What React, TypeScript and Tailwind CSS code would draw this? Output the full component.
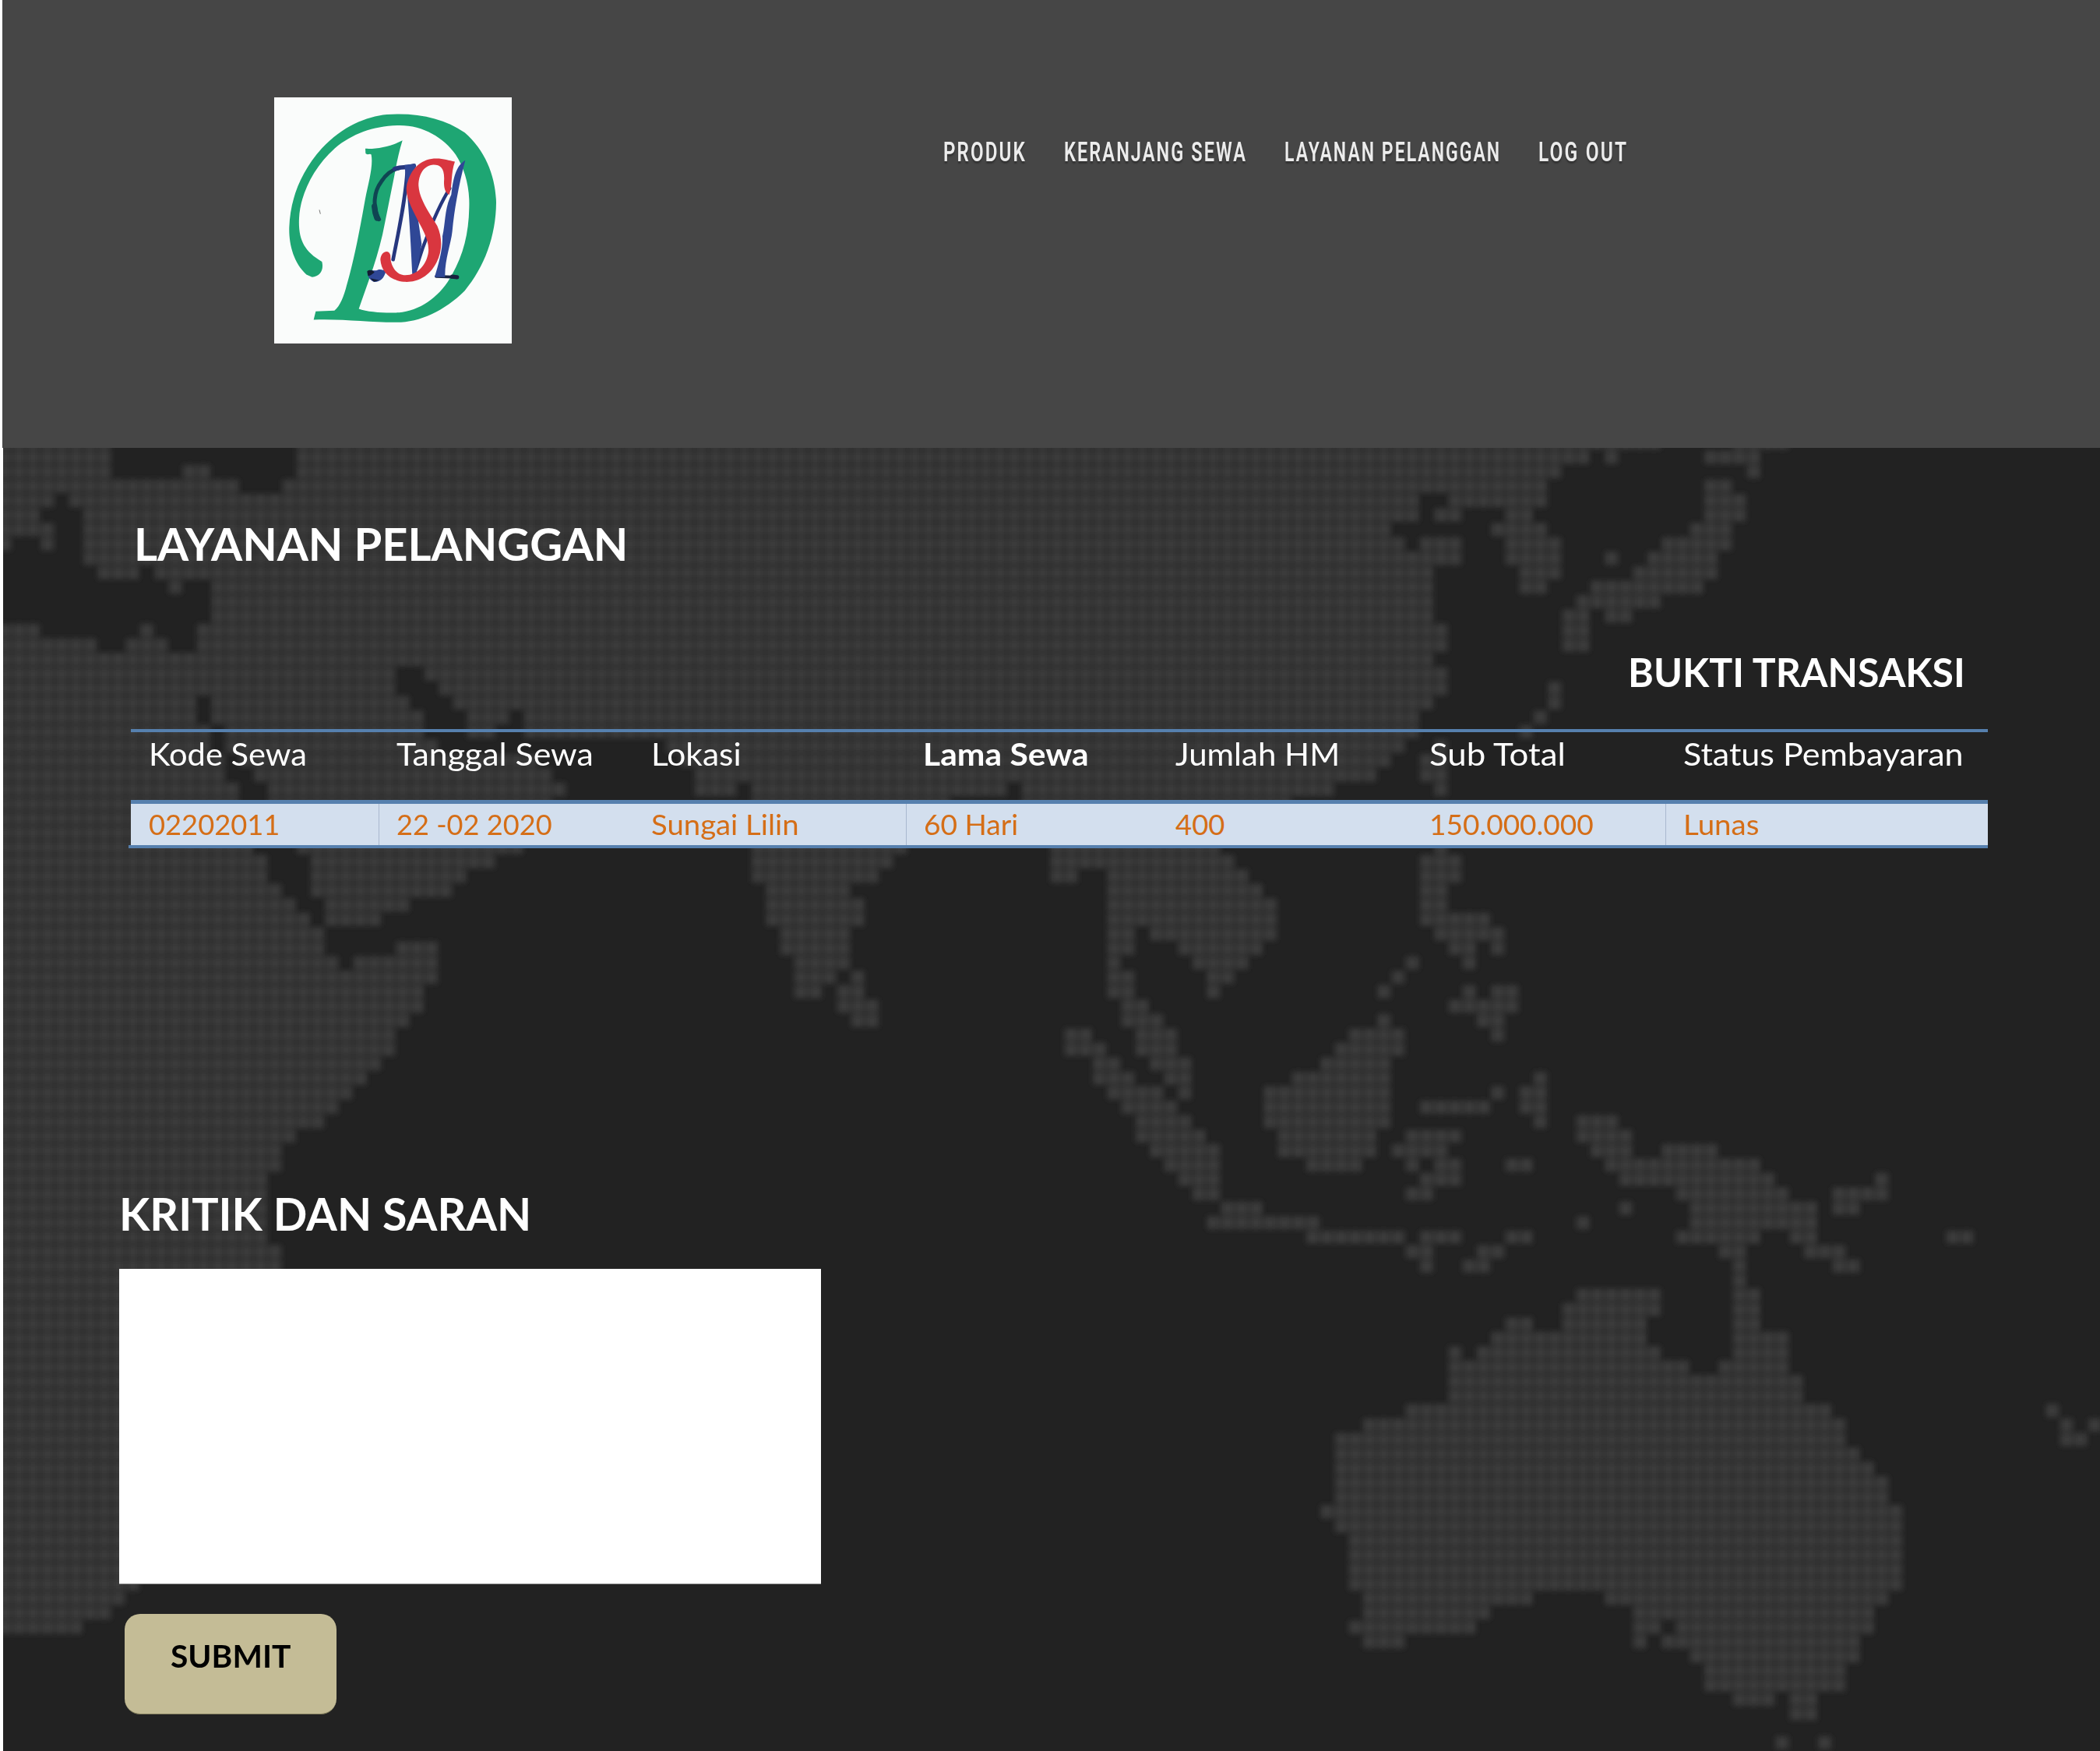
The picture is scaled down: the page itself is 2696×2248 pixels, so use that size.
import { useLayoutEffect, useRef } from "react";
import type { ReactNode } from "react";

type Run = [number, number];

const COL = 18.255;
const ROW = 18.545;

// Land cells of the dotted world map: each row lists inclusive column runs.
const LAND: Run[][] = [
  [[0, 7], [21, 116], [122, 125]],
  [[0, 7], [21, 111], [113, 113], [120, 123]],
  [[0, 7], [13, 14], [21, 109], [123, 123]],
  [[0, 16], [20, 108], [120, 121]],
  [[0, 3], [5, 99], [102, 108], [120, 122]],
  [[0, 2], [6, 99], [101, 102], [106, 107], [120, 122]],
  [[0, 3], [6, 97], [105, 108], [119, 121]],
  [[0, 0], [3, 3], [6, 98], [100, 102], [106, 109], [117, 121]],
  [[6, 102], [106, 109], [113, 113], [116, 120]],
  [[7, 9], [11, 100], [107, 109], [115, 120]],
  [[12, 12], [15, 100], [107, 108], [112, 119]],
  [[15, 100], [111, 116]],
  [[15, 100], [110, 111], [113, 114]],
  [[0, 2], [10, 10], [14, 101], [110, 111]],
  [[0, 6], [9, 11], [14, 101], [110, 111]],
  [[0, 100]],
  [[0, 27], [30, 101]],
  [[0, 27], [31, 101], [109, 109]],
  [[0, 13], [15, 28], [32, 100], [109, 109]],
  [[0, 13], [15, 29], [33, 35], [37, 99], [108, 108]],
  [[0, 14], [16, 29], [33, 34], [37, 99], [107, 107]],
  [[0, 14], [16, 30], [47, 98], [101, 101]],
  [[0, 15], [17, 37], [48, 97], [100, 101]],
  [[0, 15], [18, 38], [49, 96], [100, 101]],
  [[0, 16], [19, 39], [49, 51], [53, 70], [72, 93], [101, 101]],
  [[0, 16], [19, 38], [53, 66], [72, 90]],
  [[0, 16], [19, 38], [53, 66], [72, 88]],
  [[0, 17], [20, 37], [53, 64], [74, 85]],
  [[0, 17], [21, 36], [53, 63], [74, 85], [101, 101]],
  [[0, 18], [22, 34], [53, 62], [74, 86], [100, 102]],
  [[0, 18], [22, 32], [53, 61], [74, 75], [78, 87], [100, 102]],
  [[0, 19], [22, 31], [54, 59], [78, 88], [100, 101]],
  [[0, 20], [23, 28], [54, 60], [78, 89], [100, 101]],
  [[0, 21], [23, 26], [54, 60], [78, 89], [100, 104]],
  [[0, 22], [55, 59], [78, 79], [81, 89], [101, 105]],
  [[0, 22], [28, 30], [55, 59], [78, 79], [83, 88], [102, 103], [105, 105]],
  [[0, 23], [25, 30], [56, 59], [78, 78], [84, 87], [99, 99], [103, 103]],
  [[0, 30], [56, 58], [60, 60], [78, 79], [85, 86], [98, 98]],
  [[0, 29], [56, 57], [59, 60], [78, 79], [85, 85], [97, 97], [103, 103], [105, 106]],
  [[0, 29], [59, 61], [79, 80], [102, 106]],
  [[0, 28], [60, 61], [79, 81], [97, 97], [104, 105]],
  [[0, 27], [75, 76], [80, 82], [95, 98], [105, 105]],
  [[0, 27], [75, 77], [80, 82], [94, 98]],
  [[0, 26], [77, 78], [81, 83], [93, 97]],
  [[0, 25], [77, 79], [82, 83], [91, 97], [108, 108]],
  [[0, 24], [78, 81], [83, 83], [89, 97], [105, 105], [107, 108]],
  [[0, 23], [79, 82], [89, 97], [100, 104], [107, 108]],
  [[0, 22], [80, 83], [89, 97], [108, 108], [111, 113]],
  [[0, 20], [80, 84], [90, 96], [99, 102], [111, 114]],
  [[0, 19], [81, 85], [90, 96], [98, 101], [112, 114], [117, 120]],
  [[0, 19], [82, 85], [92, 95], [99, 99], [101, 102], [106, 107], [113, 123]],
  [[0, 18], [83, 85], [100, 102], [114, 124], [132, 132]],
  [[0, 18], [84, 85], [99, 100], [118, 125], [129, 132]],
  [[0, 18], [86, 88], [114, 114], [119, 127], [129, 130]],
  [[0, 18], [85, 92], [111, 111], [119, 127]],
  [[0, 18], [92, 98], [100, 102], [106, 107], [118, 123], [126, 127], [137, 138]],
  [[0, 19], [99, 100], [104, 105], [121, 122], [127, 129]],
  [[0, 19], [100, 100], [103, 104], [122, 122], [129, 130]],
  [[0, 19], [122, 122]],
  [[0, 19], [111, 116], [122, 123]],
  [[0, 19], [110, 116], [122, 123]],
  [[0, 19], [106, 107], [110, 115], [122, 123]],
  [[0, 19], [105, 115], [122, 125]],
  [[0, 19], [102, 102], [104, 116], [122, 125]],
  [[0, 19], [102, 118], [121, 125]],
  [[0, 18], [102, 126]],
  [[0, 18], [102, 126]],
  [[0, 18], [99, 128], [144, 144]],
  [[0, 17], [96, 129], [145, 145], [147, 147]],
  [[0, 17], [94, 129], [145, 146]],
  [[0, 16], [94, 130]],
  [[0, 16], [94, 131]],
  [[0, 15], [94, 132]],
  [[0, 14], [94, 132]],
  [[0, 13], [93, 133]],
  [[0, 12], [94, 133]],
  [[0, 12], [95, 133]],
  [[0, 11], [95, 133]],
  [[0, 10], [95, 133]],
  [[0, 9], [95, 133]],
  [[0, 8], [96, 107], [113, 132]],
  [[0, 7], [96, 104], [115, 131]],
  [[0, 5], [95, 103], [115, 116], [118, 131]],
  [[96, 98], [115, 115], [117, 130]],
  [[119, 130]],
  [[120, 129]],
  [[120, 129]],
  [[122, 124], [126, 127]],
  [[126, 127]],
  [],
  [[125, 125], [128, 128]],
];

const DOTS = LAND.map((runs, r) =>
  runs
    .map(([from, to]) => {
      let d = "";
      for (let c = from; c <= to; c++) {
        const x = (c * COL - 6.2).toFixed(1);
        const y = ((r - 1) * ROW + 3.8).toFixed(1);
        d += `M${x} ${y}h16.4v16.4h-16.4z`;
      }
      return d;
    })
    .join(""),
).join("");

function WorldMap() {
  return (
    <svg className="absolute inset-0 h-full w-full" viewBox="0 0 2692 1673" preserveAspectRatio="none" aria-hidden="true">
      <defs>
        <filter id="soft" x="-20" y="-40" width="2740" height="1760" filterUnits="userSpaceOnUse">
          <feGaussianBlur stdDeviation="3.8" />
        </filter>
      </defs>
      <path d={DOTS} fill="#3a3a3a" filter="url(#soft)" />
    </svg>
  );
}

// Condenses or widens a line of text so that it fills the given width.
function Fit({ width, children }: { width: number; children: ReactNode }) {
  const ref = useRef<HTMLSpanElement>(null);
  useLayoutEffect(() => {
    const el = ref.current;
    if (el) el.style.transform = `scaleX(${width / el.offsetWidth})`;
  }, [width]);
  return (
    <span className="block whitespace-nowrap" style={{ width }}>
      <span ref={ref} className="inline-block origin-left">
        {children}
      </span>
    </span>
  );
}

function Logo() {
  return (
    <svg className="block h-[316px] w-[305px] bg-[#fafcfb]" viewBox="66 74 915 950" preserveAspectRatio="none" role="img" aria-label="DSM">
      <path
        fill="#1ea673"
        d="M190 758C140 712 122 640 124 575C128 470 165 365 250 270C330 185 420 148 500 140C620 132 720 155 800 210C880 280 919 380 921 480C920 610 875 730 800 820C720 900 620 945 530 942C430 942 330 928 218 932L226 900L298 897C320 880 335 840 345 800C375 700 400 560 416 470C430 400 448 340 440 295C434 288 426 300 418 290L417 272C460 275 520 262 560 240C545 290 537 330 528 380L492 560C470 680 430 780 392 890C430 905 520 908 560 903C640 890 710 835 750 760C795 680 815 600 817 500C820 420 800 350 765 295C720 230 640 182 550 182C450 184 370 212 300 270C210 350 165 460 162 540C158 620 180 668 250 708C258 740 243 766 212 768Z"
      />
      <g fill="none" strokeLinecap="round">
        <path d="M470 545C445 500 448 440 478 400C500 365 525 352 545 348" stroke="#0f4552" strokeWidth="15" />
        <path d="M462 540C456 525 453 510 452 495" stroke="#0f4552" strokeWidth="22" />
        <path d="M530 350C550 342 580 346 604 338" stroke="#26377e" strokeWidth="17" />
        <path d="M578 360C572 470 545 590 524 700" stroke="#26377e" strokeWidth="14" />
        <path d="M612 735C640 640 690 510 742 425" stroke="#26377e" strokeWidth="13" />
        <path d="M690 765L772 768" stroke="#18223f" strokeWidth="11" />
        <path d="M752 766L770 768" stroke="#18223f" strokeWidth="16" />
      </g>
      <path fill="#2f4796" d="M568 335L610 330C600 440 625 570 634 640L612 765L598 760C590 600 585 500 568 335Z" />
      <path fill="#2f4796" d="M802 317C765 340 756 385 748 450C722 500 726 560 714 610C716 660 698 720 684 768L724 768C722 700 747 640 752 590C760 500 780 400 802 317Z" />
      <path fill="#2f4796" d="M425 748C440 738 455 746 465 740C480 735 490 745 497 742C490 775 470 788 450 786C435 780 425 765 425 748Z" />
      <path fill="#141c33" d="M424 745C435 737 448 742 452 750C440 760 432 765 427 762ZM436 772L450 786L470 780Z" />
      <path
        fill="#d9363f"
        d="M762 322C745 370 754 410 740 450C722 440 720 420 720 400C724 350 708 334 680 334C642 336 622 372 622 415C626 470 664 520 694 570C716 620 712 670 692 710C662 770 610 790 565 786C510 780 478 745 475 700C478 665 510 660 514 685C512 715 530 756 565 760C616 764 654 720 660 670C664 620 634 580 610 530C585 480 566 440 580 400C598 340 640 310 690 310C720 310 740 318 762 322Z"
      />
      <path d="M240 508l4 16" stroke="#777777" strokeWidth="3" />
    </svg>
  );
}

const NAV = [
  { label: "PRODUK", width: 107 },
  { label: "KERANJANG SEWA", width: 235 },
  { label: "LAYANAN PELANGGAN", width: 278 },
  { label: "LOG OUT", width: 115 },
];

const COLUMNS = [
  { title: "Kode Sewa", titleWidth: 203, value: "02202011", valueWidth: 168, divider: false, bold: false },
  { title: "Tanggal Sewa", titleWidth: 253, value: "22 -02 2020", valueWidth: 200, divider: true, bold: false },
  { title: "Lokasi", titleWidth: 116, value: "Sungai Lilin", valueWidth: 190, divider: false, bold: false },
  { title: "Lama Sewa", titleWidth: 213, value: "60 Hari", valueWidth: 121, divider: true, bold: true },
  { title: "Jumlah HM", titleWidth: 211, value: "400", valueWidth: 64, divider: false, bold: false },
  { title: "Sub Total", titleWidth: 175, value: "150.000.000", valueWidth: 211, divider: false, bold: false },
  { title: "Status Pembayaran", titleWidth: 360, value: "Lunas", valueWidth: 97, divider: true, bold: false },
];

export default function App() {
  return (
    <div className="flex h-[2248px] w-[2696px] flex-col overflow-hidden bg-white pl-1 font-['Lato',sans-serif] leading-none">
      <header className="flex h-[575px] shrink-0 items-start bg-[#464646] pt-[125px] pl-[348px] shadow-[-1px_0_0_#464646]">
        <Logo />
        <nav className="mt-[53px] ml-[554px] flex gap-12 font-['Roboto',sans-serif] text-[34.5px] font-semibold tracking-[3px] text-[#ececec] [text-shadow:0_3px_2px_#333]">
          {NAV.map((item) => (
            <a key={item.label} href="#">
              <Fit width={item.width}>{item.label}</Fit>
            </a>
          ))}
        </nav>
      </header>

      <main className="relative flex-1 bg-[#222222] text-white">
        <WorldMap />
        <div className="relative">
          <section className="pt-[94px]">
            <h1 className="ml-[168px] text-[58px] font-bold">
              <Fit width={634}>LAYANAN PELANGGAN</Fit>
            </h1>
            <h2 className="mt-[110px] mr-[173px] flex justify-end text-[51px] font-bold">
              <Fit width={433}>BUKTI TRANSAKSI</Fit>
            </h2>
            <div className="mt-12 ml-[164px] w-[2384px] border-t-4 border-[#5680ae]">
              <div className="grid h-[87px] grid-cols-[318px_327px_350px_323px_326px_326px_414px] pt-[7px] text-[41px]">
                {COLUMNS.map((c) => (
                  <div key={c.title} className={c.bold ? "pl-[22px] font-bold" : "pl-[23px]"}>
                    <Fit width={c.titleWidth}>{c.title}</Fit>
                  </div>
                ))}
              </div>
              <div className="grid h-[58px] grid-cols-[318px_327px_350px_323px_326px_326px_414px] border-t-5 border-[#5680ae] bg-[#d3dfee] text-[36.5px] text-[#d56e17]">
                {COLUMNS.map((c) => (
                  <div key={c.title} className={c.divider ? "border-l border-[#a9b8cf] pt-2 pl-[22px]" : "pt-2 pl-[23px]"}>
                    <Fit width={c.valueWidth}>{c.value}</Fit>
                  </div>
                ))}
              </div>
              <div className="-ml-[3px] h-1 bg-[#5680ae]" />
            </div>
          </section>

          <form className="mt-[441px] ml-[149px]">
            <h2 className="text-[57px] font-bold">
              <Fit width={529}>KRITIK DAN SARAN</Fit>
            </h2>
            <textarea className="mt-[42px] block h-[405px] w-[901px] resize-none border-b border-[#8a8a8a] bg-white text-black" />
            <button
              type="button"
              className="mt-[38px] ml-[7px] flex h-[129px] w-[272px] justify-center rounded-[20px] border-b border-[#85805f] bg-[#c4bc96] pt-[33px] text-[41px] leading-none font-bold text-black"
            >
              <Fit width={154}>SUBMIT</Fit>
            </button>
          </form>
        </div>
      </main>
    </div>
  );
}
